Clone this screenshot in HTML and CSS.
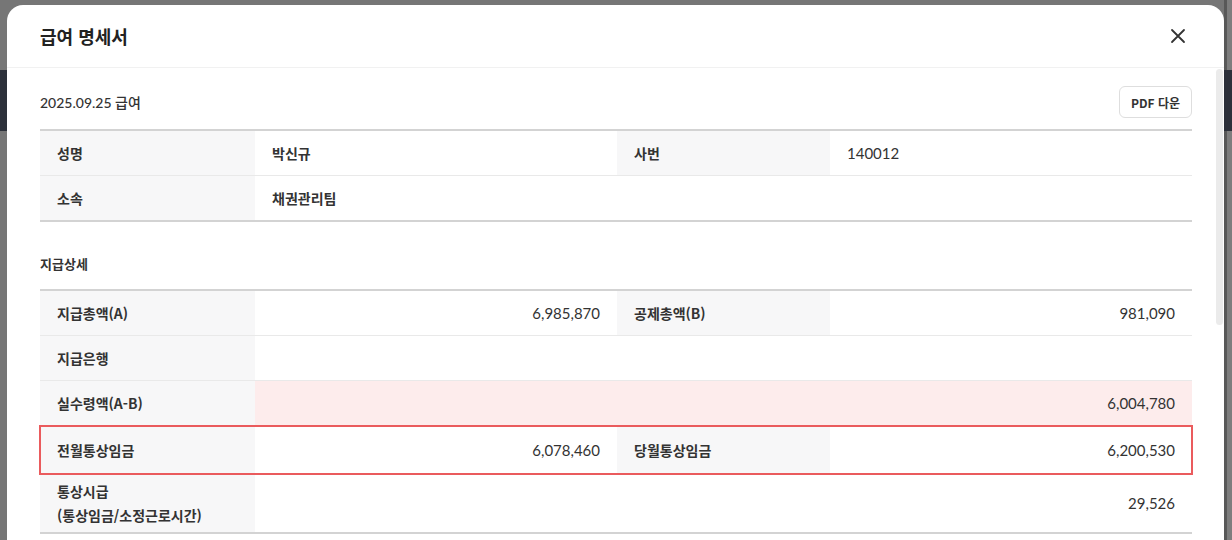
FILE: index.html
```html
<!DOCTYPE html>
<html lang="ko">
<head>
<meta charset="utf-8">
<title>급여 명세서</title>
<link rel="stylesheet" href="styles.css">
</head>
<body>
<div class="backdrop">
  <div class="modal">
    <div class="modal-header">
      <h2 class="modal-title">급여 명세서</h2>
      <button class="close-btn" aria-label="닫기">
        <svg width="16" height="16" viewBox="0 0 16 16"><path d="M2 2 L14 14 M14 2 L2 14" stroke="#333" stroke-width="1.8" stroke-linecap="round" fill="none"/></svg>
      </button>
    </div>
    <div class="modal-body">
      <div class="scroll-thumb"></div>
      <div class="top-row">
        <span class="pay-date">2025.09.25 급여</span>
        <button class="pdf-btn">PDF 다운</button>
      </div>
      <div class="sheet">
        <div class="row">
          <div class="cell label">성명</div>
          <div class="cell value">박신규</div>
          <div class="cell label">사번</div>
          <div class="cell value num-left">140012</div>
        </div>
        <div class="row">
          <div class="cell label">소속</div>
          <div class="cell value span3">채권관리팀</div>
        </div>
      </div>
      <h3 class="section-title">지급상세</h3>
      <div class="sheet">
        <div class="row">
          <div class="cell label">지급총액(A)</div>
          <div class="cell value num">6,985,870</div>
          <div class="cell label">공제총액(B)</div>
          <div class="cell value num">981,090</div>
        </div>
        <div class="row">
          <div class="cell label">지급은행</div>
          <div class="cell value span3"></div>
        </div>
        <div class="row">
          <div class="cell label">실수령액(A-B)</div>
          <div class="cell value span3 num pink">6,004,780</div>
        </div>
        <div class="row highlight">
          <div class="cell label">전월통상임금</div>
          <div class="cell value num">6,078,460</div>
          <div class="cell label">당월통상임금</div>
          <div class="cell value num">6,200,530</div>
        </div>
        <div class="row tall">
          <div class="cell label">통상시급<br>(통상임금/소정근로시간)</div>
          <div class="cell value span3 num">29,526</div>
        </div>
      </div>
    </div>
  </div>
</div>
</body>
</html>
```

FILE: styles.css
```css
html, body {
  margin: 0;
  padding: 0;
  height: 100%;
  overflow: hidden;
}
body {
  font-family: Lato, "Noto Sans CJK KR", sans-serif;
  color: #333;
  background: #7a7a7a;
}
.backdrop {
  height: 100%;
  padding: 5px 8px 0 7px;
  box-sizing: border-box;
  background:
    linear-gradient(to bottom, transparent 70px, #2c303a 70px, #2c303a 131px, transparent 131px),
    linear-gradient(to right, #767676 1224px, #585858 1224px, #585858 1227px, #7d7d7d 1227px);
}
.modal {
  background: #fff;
  border-radius: 16px 16px 0 0;
  height: 600px;
  display: flex;
  flex-direction: column;
}
.modal-header {
  height: 63px;
  box-sizing: border-box;
  border-bottom: 1px solid #f1f1f1;
  display: flex;
  align-items: center;
  justify-content: space-between;
  padding: 0 38px 0 33px;
}
.modal-title {
  margin: 0;
  font-family: "Noto Sans CJK KR", sans-serif;
  font-size: 18px;
  font-weight: 700;
  color: #222;
}
.close-btn {
  border: 0;
  background: none;
  padding: 0;
  width: 16px;
  height: 16px;
  display: flex;
}
.modal-body {
  position: relative;
  padding: 18px 32px 0 33px;
}
.scroll-thumb {
  position: absolute;
  right: 1px;
  top: 1px;
  width: 7px;
  height: 256px;
  border-radius: 4px;
  background: #ebebeb;
}
.top-row {
  display: flex;
  align-items: center;
  justify-content: space-between;
  height: 32px;
  margin-bottom: 11px;
}
.pay-date {
  font-size: 14px;
  font-weight: 500;
  color: #333;
}
.pdf-btn {
  font-family: "Noto Sans CJK KR", sans-serif;
  font-size: 12px;
  font-weight: 700;
  color: #333;
  background: #fff;
  border: 1px solid #dedede;
  border-radius: 6px;
  height: 32px;
  padding: 0 11px;
}
.sheet {
  border-top: 2px solid #d3d3d3;
  border-bottom: 2px solid #d3d3d3;
}
.row {
  display: grid;
  grid-template-columns: 215px 362px 213px 1fr;
  min-height: 44px;
  border-bottom: 1px solid #e9e9e9;
}
.row:last-child {
  border-bottom: 0;
}
.cell {
  display: flex;
  align-items: center;
  padding: 5px 16px 5px 17px;
  font-size: 14px;
  line-height: 24px;
}
.label {
  background: #f7f7f8;
  font-family: "Noto Sans CJK KR", sans-serif;
  font-weight: 700;
  color: #333;
}
.value {
  font-family: "Noto Sans CJK KR", sans-serif;
  font-weight: 700;
}
.span3 {
  grid-column: 2 / 5;
}
.num, .num-left {
  font-family: Lato, "Noto Sans CJK KR", sans-serif;
  font-size: 15px;
  font-weight: 400;
}
.num {
  justify-content: flex-end;
  padding-right: 17px;
}
.pink {
  background: #fdecec;
}
.highlight {
  min-height: 47px;
  outline: 2px solid #ea5b5d;
  outline-offset: -1px;
  position: relative;
}
.section-title {
  margin: 0;
  font-family: "Noto Sans CJK KR", sans-serif;
  font-size: 13px;
  font-weight: 700;
  line-height: 20px;
  padding: 32px 0 15px;
  color: #333;
}
```
